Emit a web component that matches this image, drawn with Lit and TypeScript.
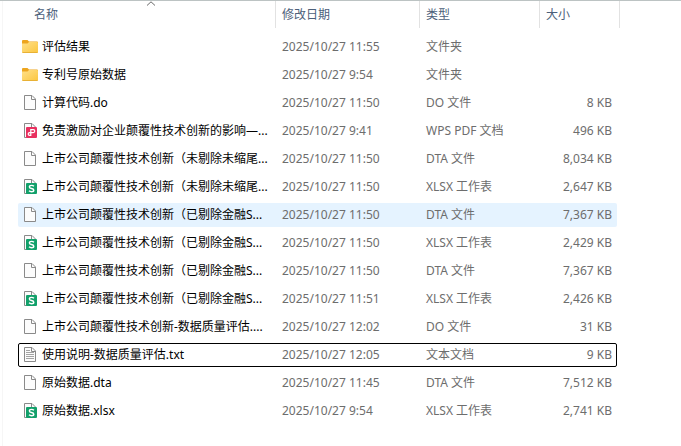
import { LitElement, html, css, svg } from "lit";
import { customElement, property } from "lit/decorators.js";
import { classMap } from "lit/directives/class-map.js";

type Kind = "folder" | "blank" | "pdf" | "sheet" | "text";

interface Entry {
  name: string;
  date: string;
  type: string;
  size: string;
  kind: Kind;
  state?: "hover" | "focus";
}

const entries: Entry[] = [
  { name: "评估结果", date: "2025/10/27 11:55", type: "文件夹", size: "", kind: "folder" },
  { name: "专利号原始数据", date: "2025/10/27 9:54", type: "文件夹", size: "", kind: "folder" },
  { name: "计算代码.do", date: "2025/10/27 11:50", type: "DO 文件", size: "8 KB", kind: "blank" },
  { name: "免责激励对企业颠覆性技术创新的影响—...", date: "2025/10/27 9:41", type: "WPS PDF 文档", size: "496 KB", kind: "pdf" },
  { name: "上市公司颠覆性技术创新（未剔除未缩尾...", date: "2025/10/27 11:50", type: "DTA 文件", size: "8,034 KB", kind: "blank" },
  { name: "上市公司颠覆性技术创新（未剔除未缩尾...", date: "2025/10/27 11:50", type: "XLSX 工作表", size: "2,647 KB", kind: "sheet" },
  { name: "上市公司颠覆性技术创新（已剔除金融S...", date: "2025/10/27 11:50", type: "DTA 文件", size: "7,367 KB", kind: "blank", state: "hover" },
  { name: "上市公司颠覆性技术创新（已剔除金融S...", date: "2025/10/27 11:50", type: "XLSX 工作表", size: "2,429 KB", kind: "sheet" },
  { name: "上市公司颠覆性技术创新（已剔除金融S...", date: "2025/10/27 11:50", type: "DTA 文件", size: "7,367 KB", kind: "blank" },
  { name: "上市公司颠覆性技术创新（已剔除金融S...", date: "2025/10/27 11:51", type: "XLSX 工作表", size: "2,426 KB", kind: "sheet" },
  { name: "上市公司颠覆性技术创新-数据质量评估....", date: "2025/10/27 12:02", type: "DO 文件", size: "31 KB", kind: "blank" },
  { name: "使用说明-数据质量评估.txt", date: "2025/10/27 12:05", type: "文本文档", size: "9 KB", kind: "text", state: "focus" },
  { name: "原始数据.dta", date: "2025/10/27 11:45", type: "DTA 文件", size: "7,512 KB", kind: "blank" },
  { name: "原始数据.xlsx", date: "2025/10/27 9:54", type: "XLSX 工作表", size: "2,741 KB", kind: "sheet" },
];

@customElement("file-icon")
export class FileIcon extends LitElement {
  @property() kind: Kind = "blank";

  static styles = css`
    :host { display: block; width: 16px; height: 16px; flex: none; }
    svg { display: block; }
  `;

  private sheet() {
    return svg`<path d="M2.5 0.5H10L13.5 4V14.5H2.5Z" fill="#fcfcfc" stroke="#8a8a8a"/>
      <path d="M9.5 0.5V4.5H13.5" fill="none" stroke="#8a8a8a"/>`;
  }

  private art() {
    switch (this.kind) {
      case "folder":
        return svg`<defs><linearGradient id="g" x1="0" y1="0" x2="1" y2="1">
            <stop offset="0" stop-color="#ffe08a"/><stop offset="1" stop-color="#fbc63f"/></linearGradient></defs>
          <path d="M0 2Q0 1 1 1H5.5L7 2.5H15Q16 2.5 16 3.5V7H0Z" fill="#eda51f"/>
          <path d="M0 4.5H5.5L7 3H15Q16 3 16 4V13Q16 14 15 14H1Q0 14 0 13Z" fill="url(#g)"/>
          <path d="M0.5 13.5H15.5" stroke="#e8b135"/>`;
      case "pdf":
        return svg`${this.sheet()}<rect x="4" y="4" width="11" height="11" rx="1" fill="#e8305f"/>
          <path d="M8.8 9.5V6.6H11.2Q12.8 6.6 12.8 8.1T11.2 9.6H7.6Q6.2 9.6 6.2 11T7.6 12.4H8.8V9.5" fill="none" stroke="#fff" stroke-width="1.2"/>`;
      case "sheet":
        return svg`${this.sheet()}<rect x="4" y="4" width="11" height="11" rx="1" fill="#12a06a"/>
          <path d="M12 7.2Q11 6.4 9.5 6.4Q7.4 6.4 7.4 7.9Q7.4 9.1 9.5 9.5Q11.8 9.9 11.8 11.2Q11.8 12.7 9.5 12.7Q8 12.7 7 11.8" fill="none" stroke="#fff" stroke-width="1.4"/>`;
      default:
        return this.kind === "text"
          ? svg`${this.sheet()}<path d="M4 3.5H8M4 5.5H12M4 7.5H12M4 9.5H12M4 11.5H12" stroke="#a4a4a4"/>`
          : this.sheet();
    }
  }

  render() {
    return html`<svg width="16" height="16" viewBox="0 0 16 16" aria-hidden="true">${this.art()}</svg>`;
  }
}

@customElement("app-root")
export class AppRoot extends LitElement {
  static styles = css`
    :host {
      display: block;
      box-sizing: border-box;
      min-height: 100vh;
      padding: 0 61px 0 16px;
      border-top: 1px solid #bcc3c3;
      background: linear-gradient(#f6f6f6, #f6f6f6) 2px 0 / 1px 100% no-repeat #fff;
      font: 12px/16px "Noto Sans", "Noto Sans CJK SC", sans-serif;
      color: #6d6d6d;
    }
    .files {
      width: 100%;
      table-layout: fixed;
      border-collapse: separate;
      border-spacing: 0;
    }
    .date { width: 144px; }
    .type { width: 120px; }
    .size { width: 80px; }
    .head {
      position: relative;
      height: 32px;
      padding: 0;
      text-align: left;
      vertical-align: top;
      font-weight: 400;
    }
    .sort {
      display: block;
      box-sizing: border-box;
      width: 100%;
      height: 27px;
      padding: 0 6px;
      border: 0;
      border-right: 1px solid #e2e2e2;
      background: none;
      font: inherit;
      color: #4c607a;
      text-align: left;
    }
    .first .sort { padding-left: 18px; }
    .caret { position: absolute; top: 0; left: 50%; }
    .row { position: relative; isolation: isolate; height: 28px; }
    .hover .cell:first-child::before, .focus .cell:first-child::before {
      content: "";
      position: absolute;
      z-index: -1;
      inset: 2px 3px 2px 2px;
      border-radius: 2px;
    }
    .hover .cell:first-child::before { background: #e5f3ff; }
    .focus .cell:first-child::before { border: 1px solid #000; }
    .cell { padding: 0 6px; white-space: nowrap; }
    .name { display: flex; align-items: center; gap: 4px; color: #000; }
    .number { padding-right: 8px; text-align: right; }
  `;

  render() {
    return html`
      <table class="files" lang="zh-CN">
        <colgroup><col /><col class="date" /><col class="type" /><col class="size" /></colgroup>
        <thead>
          <tr>
            <th class="head first" scope="col" aria-sort="ascending">
              <button class="sort">名称</button>
              <svg class="caret" width="10" height="6" viewBox="0 0 10 6" aria-hidden="true">
                <path d="M1 4.5L5 0.8L9 4.5" fill="none" stroke="#6a6a6a" />
              </svg>
            </th>
            ${["修改日期", "类型", "大小"].map(
              (label) => html`<th class="head" scope="col"><button class="sort">${label}</button></th>`
            )}
          </tr>
        </thead>
        <tbody>
          ${entries.map(
            (e) => html`
              <tr class=${classMap({ row: true, hover: e.state === "hover", focus: e.state === "focus" })}>
                <td class="cell"><div class="name"><file-icon .kind=${e.kind}></file-icon>${e.name}</div></td>
                <td class="cell">${e.date}</td>
                <td class="cell">${e.type}</td>
                <td class="cell number">${e.size}</td>
              </tr>
            `
          )}
        </tbody>
      </table>
    `;
  }
}
